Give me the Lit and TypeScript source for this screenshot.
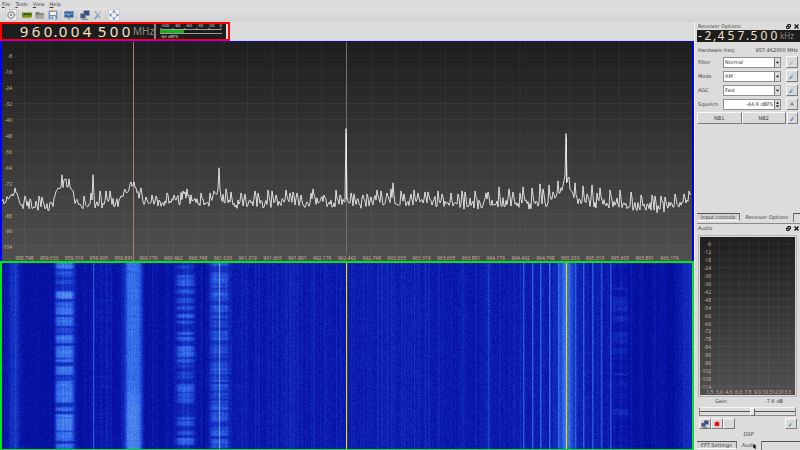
import { LitElement, html, css, svg } from "lit";
import { customElement } from "lit/decorators.js";

/* Deterministic noise so that every paint gives the same trace. */
function makeRandom(seed: number) {
  let s = seed >>> 0;
  return () => {
    s = (s + 0x6d2b79f5) >>> 0;
    let t = s;
    t = Math.imul(t ^ (t >>> 15), t | 1);
    t ^= t + Math.imul(t ^ (t >>> 7), t | 61);
    return ((t ^ (t >>> 14)) >>> 0) / 4294967296;
  };
}

const W = 690;
const FALL_H = 185;

/* Noise floor as [bin, level] pairs, interpolated linearly. */
const FLOOR: [number, number][] = [
  [0, 159], [5, 157], [10, 153], [14, 152], [19, 160], [30, 163], [46, 164], [51, 161], [54, 148],
  [59, 142], [64, 140], [68, 145], [73, 158], [78, 162], [98, 160], [118, 160], [124, 149],
  [131, 143], [136, 147], [142, 160], [158, 161], [174, 158], [184, 154], [194, 158], [202, 161],
  [210, 156], [217, 151], [223, 156], [230, 161], [262, 161], [280, 159], [290, 156], [302, 161],
  [320, 159], [330, 161], [344, 160], [370, 159], [385, 157], [395, 160], [425, 158], [440, 161],
  [480, 160], [545, 160], [557, 154], [561, 144], [563, 132], [566, 132], [568, 144], [572, 154],
  [580, 158], [608, 160], [622, 162], [640, 164], [670, 164], [680, 158], [689, 153],
];

const SPIKES: [number, number][] = [
  [13, 145], [23, 153], [37, 153], [40, 154], [60, 132], [64, 136], [67, 136], [71, 148], [82, 153],
  [89, 150], [91, 132], [98, 148], [104, 148], [108, 148], [119, 153], [129, 139], [132, 139],
  [139, 145], [150, 152], [154, 153], [165, 150], [172, 152], [181, 148], [185, 146], [199, 150],
  [208, 150], [212, 148], [217, 125], [224, 146], [229, 149], [239, 150], [243, 151], [253, 148],
  [256, 150], [266, 147], [270, 148], [274, 152], [284, 147], [288, 150], [291, 149], [295, 150],
  [299, 152], [309, 150], [311, 146], [322, 152], [334, 147], [338, 152], [344, 86], [349, 150],
  [352, 151], [361, 152], [365, 151], [375, 147], [379, 148], [385, 150], [389, 146], [391, 140],
  [399, 148], [402, 151], [409, 151], [412, 147], [416, 150], [423, 149], [426, 149], [436, 148],
  [440, 151], [449, 150], [456, 151], [460, 148], [463, 149], [473, 148], [484, 150], [486, 149],
  [497, 144], [507, 146], [511, 149], [518, 150], [521, 144], [530, 145], [538, 141], [541, 146],
  [547, 142], [551, 149], [556, 138], [564, 91], [573, 140], [581, 143], [585, 151], [590, 142],
  [595, 150], [598, 145], [608, 147], [618, 147], [629, 149], [639, 152], [650, 152], [653, 153],
  [659, 153], [663, 154], [673, 151], [682, 151], [687, 148],
];

/* Steady carriers in the waterfall as [bin, strength]. */
const CARRIERS: [number, number][] = [
  [91, 0.28], [217, 0.45], [486, 0.12], [521, 0.22], [530, 0.26], [538, 0.3], [547, 0.28],
  [556, 0.18], [573, 0.16], [581, 0.28], [590, 0.22], [599, 0.22], [608, 0.18],
];

/* Transmissions as [first line, last line, strength]. */
const CHANNEL_A: [number, number, number][] = [
  [0, 5, 0.5], [8, 13, 0.26], [17, 20, 0.22], [28, 35, 0.5], [39, 44, 0.38], [45, 51, 0.46],
  [54, 62, 0.42], [65, 69, 0.22], [72, 79, 0.42], [83, 93, 0.44], [95, 97, 0.46], [102, 110, 0.44],
  [113, 115, 0.22], [117, 138, 0.44], [143, 146, 0.4], [150, 166, 0.46], [168, 176, 0.4], [180, 184, 0.42],
];
const CHANNEL_B: [number, number, number][] = [
  [3, 4, 0.2], [12, 14, 0.3], [16, 22, 0.34], [26, 30, 0.3], [35, 39, 0.28], [43, 46, 0.28],
  [51, 54, 0.32], [58, 60, 0.32], [69, 71, 0.32], [74, 77, 0.34], [83, 92, 0.4], [95, 98, 0.34],
  [101, 102, 0.26], [108, 114, 0.2], [120, 127, 0.36], [129, 138, 0.28], [153, 155, 0.36],
  [157, 161, 0.32], [167, 170, 0.34], [174, 180, 0.36],
];

function floorAt(x: number) {
  for (let i = 1; i < FLOOR.length; i++) {
    const [x1, y1] = FLOOR[i];
    if (x <= x1) {
      const [x0, y0] = FLOOR[i - 1];
      return y0 + ((y1 - y0) * (x - x0)) / (x1 - x0);
    }
  }
  return FLOOR[FLOOR.length - 1][1];
}

function tracePath() {
  const rnd = makeRandom(21);
  const ys: number[] = [];
  for (let x = 0; x < W; x++) ys.push(floorAt(x) + (rnd() + rnd() - 1) * 7);
  for (const [x, y] of SPIKES) {
    ys[x] = y;
    if (x + 1 < W) ys[x + 1] = (ys[x + 1] + Math.max(y, 146)) / 2;
  }
  return "M" + ys.map((y, x) => `${x} ${y.toFixed(1)}`).join("L");
}

type Stop = [number, number, number, number];
const PALETTE: Stop[] = [
  [0, 0, 0, 120], [0.25, 8, 20, 168], [0.5, 28, 66, 208], [0.75, 58, 118, 240], [1, 110, 160, 225],
];
function shade(v: number) {
  const t = Math.min(1, Math.max(0, v));
  for (let i = 1; i < PALETTE.length; i++) {
    const b = PALETTE[i];
    if (t <= b[0]) {
      const a = PALETTE[i - 1];
      const k = (t - a[0]) / (b[0] - a[0]);
      return [a[1] + (b[1] - a[1]) * k, a[2] + (b[2] - a[2]) * k, a[3] + (b[3] - a[3]) * k];
    }
  }
  return [110, 160, 225];
}

function paintWaterfall(ctx: CanvasRenderingContext2D) {
  const rnd = makeRandom(7);
  const base: number[] = [];
  for (let x = 0; x < W; x++) {
    const lift = Math.max(0, 162 - floorAt(x)) / 100;
    base.push(0.18 + Math.min(0.08, lift) + (x > 225 && x < 610 ? 0.05 : 0) + rnd() * 0.06);
  }
  for (const [x, y] of SPIKES) {
    const gain = 0.07 * Math.min(1, (162 - y) / 14);
    base[x] += gain;
    if (x + 1 < W) base[x + 1] += gain / 2;
  }
  for (let d = -14; d <= 14; d++) base[564 + d] += 0.42 * Math.exp(-(d * d) / 40);
  for (const [x, v] of CARRIERS) {
    base[x] += v;
    if (x !== 217) base[x + 1] += v / 2;
  }
  for (let x = 676; x < W; x++) base[x] += 0.06;

  const soften = (raw: number[]) =>
    raw.map((v, i) => v * 0.6 + (raw[Math.max(0, i - 1)] + (raw[i + 1] ?? v)) * 0.2);
  const keyed = (list: [number, number, number][], idle: number) =>
    soften(Array.from({ length: FALL_H }, (_, y) => {
      const hit = list.find(([a, b]) => y >= a && y <= b);
      return (hit ? hit[2] : idle) * (0.75 + rnd() * 0.4);
    }));
  /* Bursty transmissions: strength changes every few lines. */
  const bursts = (quiet: number, peak: number, maxRun: number) => {
    const raw: number[] = [];
    while (raw.length < FALL_H) {
      const on = rnd() > quiet;
      const run = 1 + Math.floor(rnd() * (on ? maxRun : maxRun * 0.7));
      const level = on ? peak * (0.6 + rnd() * 0.45) : peak * (0.1 + 0.3 * rnd());
      for (let i = 0; i < run; i++) raw.push(level * (0.85 + rnd() * 0.3));
    }
    return soften(raw);
  };
  const steady = (v: number, later = v) =>
    Array.from({ length: FALL_H }, (_, y) => v + (later - v) / (1 + Math.exp((130 - y) / 4)) + (rnd() - 0.5) * 0.05);
  const bands = [
    { mid: 62, half: 6, level: keyed(CHANNEL_A, 0.08) },
    { mid: 183, half: 6, level: keyed(CHANNEL_B, 0.07) },
    { mid: 217, half: 6, level: bursts(0.35, 0.34, 3) },
    { mid: 618, half: 5, level: bursts(0.75, 0.16, 6) },
    { mid: 100, half: 6, level: bursts(0.85, 0.08, 2) },
    { mid: 12, half: 2, level: steady(0.12) },
    { mid: 131, half: 5, level: steady(0.4, 0.5) },
  ];

  const img = ctx.createImageData(W, FALL_H);
  for (let y = 0; y < FALL_H; y++) {
    for (let x = 0; x < W; x++) {
      let v = base[x] + (rnd() - 0.5) * 0.12;
      for (const b of bands) {
        const over = Math.max(0, Math.abs(x - b.mid) - b.half);
        if (over < 9) v += b.level[y] * Math.exp(-(over * over) / 10) * (0.92 + rnd() * 0.16);
      }
      let c = shade(v);
      if (x === 344 || x === 564) c = [218, 214, 40];
      if (x === 345 || x === 565) c = [c[0] * 0.7 + 40, c[1] * 0.7 + 40, c[2] * 0.6];
      const o = (y * W + x) * 4;
      img.data[o] = c[0];
      img.data[o + 1] = c[1];
      img.data[o + 2] = c[2];
      img.data[o + 3] = 255;
    }
  }
  ctx.putImageData(img, 0, 0);
}

const shared = css`
  :host { display: block; box-sizing: border-box; }
  * { box-sizing: border-box; }
  button, select, input { font: inherit; color: inherit; margin: 0; padding: 0; }
`;

@customElement("digit-display")
class DigitDisplay extends LitElement {
  static properties = { value: {}, unit: {} };
  declare value: string;
  declare unit: string;
  static styles = [shared, css`
    :host { display: flex; align-items: center; background: #1d1d1d; color: #f8e2c6; white-space: pre; }
    .digit { width: var(--cell, 12px); text-align: center; }
    .sep { width: 3px; display: flex; justify-content: center; }
    .sep:first-child { width: 6px; }
    .unit { color: #8c8a88; font-size: var(--unit, 10px); margin-left: 1px; }
  `];
  render() {
    return html`${[...this.value].map(
      (c) => html`<span class=${/[0-9]/.test(c) ? "digit" : "sep"}>${c}</span>`
    )}<span class="unit">${this.unit}</span>`;
  }
}

@customElement("spectrum-plot")
class SpectrumPlot extends LitElement {
  static styles = [shared, css`
    :host { display: grid; background: linear-gradient(#1e1e1e, #505050); overflow: hidden; }
    svg, .levels, .freqs { grid-area: 1 / 1; }
    svg { width: 100%; height: 100%; min-height: 0; }
    .levels { display: flex; flex-direction: column; width: 10px; padding: 6px 0 6px; text-align: right; }
    .levels span, .freqs span { flex: 1 1 0; display: flex; align-items: center; }
    .levels span { justify-content: flex-end; }
    .freqs { display: flex; align-self: end; padding: 0 10px; height: 6px; }
    .freqs span { justify-content: center; min-width: 0; }
    .levels, .freqs { font: 5px "Noto Sans", sans-serif; color: #c8b09a; }
  `];
  render() {
    const freqs = Array.from({ length: 27 }, (_, n) => 962.462 + ((n - 13) * 2) / 7);
    const levels = Array.from({ length: 13 }, (_, n) => -8 * (n + 1));
    return html`
      <svg viewBox="0 0 690 218" preserveAspectRatio="none" aria-label="Spectrum">
        <g stroke="#ffffff" stroke-opacity="0.05">
          ${freqs.map((_, n) => svg`<path d="M${(22.5 + n * 24.77).toFixed(1)} 0V211"></path>`)}
          ${levels.map((_, n) => svg`<path d="M11 ${(14 + n * 15.7).toFixed(1)}H690"></path>`)}
        </g>
        <path d="M344.5 0V211" stroke="#69717f" stroke-width="1"></path>
        <path d="M131.5 0V218" stroke="#b07878" stroke-width="1"></path>
        <path d=${tracePath()} fill="none" stroke="#ececec" stroke-width="0.9"></path>
        <path d="M344.5 90V156M564.5 95V140" stroke="#e8e8e8" stroke-width="1"></path>
      </svg>
      <div class="levels">${levels.map((l) => html`<span>${l === -80 ? "" : l}</span>`)}</div>
      <div class="freqs">${freqs.map((f) => html`<span>${f.toFixed(3)}</span>`)}</div>
    `;
  }
}

@customElement("waterfall-plot")
class WaterfallPlot extends LitElement {
  static styles = [shared, css`
    :host { display: grid; overflow: hidden; background: #0808a0; }
    canvas { width: 100%; height: 100%; min-height: 0; display: block; image-rendering: pixelated; }
  `];
  firstUpdated() {
    const ctx = this.renderRoot.querySelector("canvas")!.getContext("2d");
    if (ctx) paintWaterfall(ctx);
  }
  render() {
    return html`<canvas width=${W} height=${FALL_H} aria-label="Waterfall"></canvas>`;
  }
}

@customElement("audio-plot")
class AudioPlot extends LitElement {
  static styles = [shared, css`
    :host { display: grid; background: linear-gradient(#1f1f1f, #505050); overflow: hidden;
      font: 5px "Noto Sans", sans-serif; color: #c8b09a; }
    svg, .levels, .freqs { grid-area: 1 / 1; }
    svg { width: 100%; height: 100%; min-height: 0; }
    .levels { display: flex; flex-direction: column; width: 11px; padding: 3px 0 4px; }
    .levels span { flex: 1 1 0; display: flex; align-items: center; justify-content: flex-end; }
    .freqs { display: flex; align-self: end; height: 6px; padding: 0 4px 0 5px; }
    .freqs span { flex: 1 1 0; min-width: 0; display: flex; justify-content: center; align-items: center; }
  `];
  render() {
    return html`
      <svg viewBox="0 0 97 160" preserveAspectRatio="none" aria-label="Audio spectrum">
        <g stroke="#ffffff" stroke-opacity="0.06">
          ${Array.from({ length: 9 }, (_, n) => svg`<path d="M${10 + n * 10} 0V153"></path>`)}
          ${Array.from({ length: 19 }, (_, n) => svg`<path d="M12 ${7 + n * 8}H97"></path>`)}
        </g>
      </svg>
      <div class="levels">${Array.from({ length: 19 }, (_, n) => html`<span>${-6 * (n + 1)}</span>`)}</div>
      <div class="freqs">${Array.from({ length: 9 }, (_, n) => html`<span>${((n + 1) * 1.5).toFixed(1)}</span>`)}</div>
    `;
  }
}

const iconGear = svg`<circle cx="8" cy="8" r="5" fill="none" stroke="#a0a0a0" stroke-width="2.4"></circle><circle cx="8" cy="8" r="6.8" fill="none" stroke="#a8a8a8" stroke-width="1.4" stroke-dasharray="2 2"></circle><circle cx="8" cy="8" r="1.8" fill="#777"></circle>`;
const iconCard = svg`<path d="M0 4H16V11H0Z" fill="#6c8c1c"></path><path d="M3 5h3v3H3zM7 5h3v3H7zM11 5h3v3h-3z" fill="#33440c"></path><path d="M2 11H14V13H2Z" fill="#b39a30"></path><path d="M0 3V14" stroke="#555"></path>`;
const iconFolder = svg`<path d="M1 3H6L8 5H14V13H1Z" fill="#77776a"></path><path d="M3 7H15.500L14 14H1Z" fill="#a5a596"></path>`;
const iconSave = svg`<path d="M1 1H15V15H1Z" fill="#5b8cc4"></path><path d="M3 1H13V8H3Z" fill="#f2f2ee"></path><path d="M3 1H13V3H3Z" fill="#c77d4a"></path><path d="M4 10H12V15H4Z" fill="#dce4ec"></path><path d="M6 11h2v3H6z" fill="#456"></path>`;
const iconScreen = svg`<rect x="0.500" y="2" width="15" height="10" rx="1" fill="#2c5f9e" stroke="#8fa4bb"></rect><path d="M2 7H5L6 5L8 9L10 6H14" fill="none" stroke="#cfe3f8"></path><path d="M5 14H11" stroke="#999" stroke-width="2"></path>`;
const iconNet = svg`<rect x="6" y="1" width="9" height="8" fill="#34487e" stroke="#9aa0a8"></rect><rect x="1" y="6" width="8" height="7" fill="#3b528c" stroke="#7b828e"></rect><path d="M3 15H13" stroke="#888" stroke-width="2"></path>`;
const iconTools = svg`<path d="M3 2L12 13" stroke="#a4a8ae" stroke-width="2"></path><path d="M13 2L9 7" stroke="#b5b9be" stroke-width="2"></path><path d="M8 8L3 14" stroke="#6c97c8" stroke-width="2.500"></path>`;
const iconFull = svg`<path d="M8 0L11 4H5ZM8 16L11 12H5ZM0 8L4 5V11ZM16 8L12 5V11Z" fill="#5a87bd"></path><path d="M5 5h6v6H5z" fill="#ffffff" stroke="#b8c8da"></path>`;
const iconWrench = svg`<path d="M13 2L8 8" stroke="#c4c8cd" stroke-width="2"></path><path d="M8.500 7.500L4 13" stroke="#5d8fca" stroke-width="2.500"></path><path d="M8 9L12 13" stroke="#cbced2" stroke-width="1.500"></path>`;
const iconWrenchOff = svg`<path d="M13 2L8 8" stroke="#cccccc" stroke-width="2"></path><path d="M8.500 7.500L4 13" stroke="#b4b8bc" stroke-width="2.500"></path>`;
const iconRec = svg`<circle cx="8" cy="8" r="5" fill="#e01818"></circle>`;
const iconPlay = svg`<path d="M6 4L12 8L6 12Z" fill="none" stroke="#cfcfcf"></path>`;
const icon = (shape: unknown) => html`<svg class="icon" viewBox="0 0 16 16" aria-hidden="true">${shape}</svg>`;

@customElement("app-root")
class AppRoot extends LitElement {
  static styles = [shared, css`
    :host { display: flex; flex-direction: column; height: 100vh; overflow: hidden; background: #dcdcdc;
      color: #3c3c3c; font: 5px/8px "DejaVu Sans", sans-serif; }
    .icon { width: 10px; height: 10px; display: block; }
    nav { display: flex; gap: 5px; height: 8px; padding: 0 2px; }
    nav button { border: 0; background: none; }
    .mnemonic { text-decoration: underline; }
    .toolbar { display: flex; align-items: center; height: 14px; padding: 0 5px; gap: 1px; background: linear-gradient(#e0e0e0, #d2d2d2); }
    .toolbar button { border: 0; background: none; width: 12px; height: 12px; display: grid; place-items: center; }
    .toolbar .checked { background: #f0f0f0; border: 1px solid #cccccc; }
    .rule { width: 1px; height: 10px; background: #c8c8c8; margin-right: 1px; }
    .main { flex: 1; min-height: 0; display: grid; grid-template-columns: minmax(0, 1fr) 106px; }
    .left { display: flex; flex-direction: column; min-height: 0; min-width: 0; }
    .tuner { display: flex; align-self: flex-start; width: 230px; height: 19px; border: 2px solid #ff0000; background: #1d1d1d; }
    .tuner digit-display { flex: 1; --cell: 12px; font: 15px/15px "Noto Sans", sans-serif; padding-left: 16px; }
    .meter { width: 75px; border: 1px solid #888; border-right-color: #ddd; border-width: 0 2px; padding: 0 4px; color: #d8d8d8; font: 4px/5px "DejaVu Sans", sans-serif; }
    .scale { display: flex; justify-content: space-between; height: 4px; line-height: 4px; }
    .ticks { display: block; width: 100%; height: 2px; }
    .bar { height: 4px; background: #1d1d1d; border-bottom: 1px solid #999; }
    .fill { height: 3px; background: #18b018; }
    .plot { min-height: 0; border: 2px solid; }
    spectrum-plot.plot { flex: 13 1 0; border-color: #0000ff; border-width: 1px 2px 0; }
    waterfall-plot.plot { flex: 11 1 0; border-color: #00e61e; border-width: 2px 2px 1px 2px; }
    .side { border-left: 1px solid #f6f6f6; display: flex; flex-direction: column; min-height: 0; }
    .side > * { margin-left: 2px; }
    .title { display: flex; align-items: center; height: 8px; gap: 3px; padding: 0 1px; }
    .title .name { flex: 1; }
    .title button { border: 0; background: none; width: 5px; height: 5px; }
    .title .icon { width: 5px; height: 5px; }
    .side digit-display { height: 12px; --cell: 10px; --unit: 8px; font: 12px/12px "Noto Sans", sans-serif; }
    .options { display: flex; flex-direction: column; gap: 2px; padding: 3px 2px 0 1px; }
    .line { display: flex; justify-content: space-between; height: 9px; align-items: center; }
    .row { display: grid; grid-template-columns: 20px minmax(0, 1fr) 12px; column-gap: 5px; height: 12px; align-items: center; }
    .field { display: grid; height: 11px; background: #fff; border: 1px solid #8d8d8d; }
    .field select, .field input { grid-area: 1 / 1; width: 100%; border: 0; background: none; appearance: none; outline: 0; padding: 0 7px 0 1px; height: 9px; }
    .field input { text-align: right; }
    .arrows { grid-area: 1 / 1; justify-self: end; width: 6px; height: 9px; background: #dcdcdc; border-left: 1px solid #777; pointer-events: none; }
    .push { border: 1px solid; border-color: #f8f8f8 #7c7c7c #7c7c7c #f8f8f8; background: #dadada; height: 12px; display: grid; place-items: center; }
    .pair { display: grid; grid-template-columns: 1fr 1fr 12px; padding: 0 2px 0 0; margin-top: 2px; }
    .pair .push:last-child { margin-left: 1px; }
    .space { flex: 1; }
    .dock { display: flex; flex-direction: column; min-height: 0; }
    .dock.receiver { height: 202px; }
    .dock.audio { flex: 1; }
    .tabs { display: flex; height: 9px; border-top: 1px solid #555; }
    .tabs button { border: 0; border-right: 1px solid #777; background: #d2d2d2; height: 7px; line-height: 7px; padding: 0 4px; border-bottom: 1px solid #fafafa; }
    .tabs .active { background: #dcdcdc; border-bottom: 0; margin-top: -1px; height: 9px; line-height: 9px; padding: 0 5px; }
    .tabs.top { height: 11px; border-bottom: 1px solid #8a8a8a; }
    .frame { flex: 1; min-height: 0; display: flex; margin: 3px 3px 0 1px; padding: 1px; border: 1px solid #b4b4b4; }
    audio-plot { flex: 1; }
    .gain { display: flex; justify-content: space-between; padding: 0 17px 0 18px; height: 9px; }
    .slider { appearance: none; width: 97px; height: 9px; margin: 1px 0 0 2px; background: #dcdcdc; border: 1px solid #8a8a8a; border-top-color: #f4f4f4;
      background-image: linear-gradient(transparent 3px, #555 3px, #555 4px, transparent 4px); }
    .slider::-webkit-slider-thumb { appearance: none; width: 5px; height: 8px; background: #e4e4e4; border: 1px solid; border-color: #fff #666 #666 #fff; }
    .actions { display: flex; padding: 2px 3px 0 2px; }
    .actions .push { width: 12px; height: 11px; }
    .actions .icon { width: 8px; height: 8px; }
    .status { text-align: center; font-style: italic; height: 8px; margin-block: 1px 3px; }
    .tabs .hover { position: relative; }
    .pointer { position: absolute; right: 4px; top: 3px; width: 4px; height: 5px; }
  `];

  private dockTitle(name: string) {
    return html`<div class="title">
      <span class="name">${name}</span>
      <button aria-label="Float ${name}"><svg class="icon" viewBox="0 0 10 10"><path d="M3.500 1H9V6H3.500ZM1 4H6.500V9H1Z" fill="#ddd" stroke="#222" stroke-width="2"></path></svg></button>
      <button aria-label="Close ${name}"><svg class="icon" viewBox="0 0 10 10"><path d="M1 1L9 9M9 1L1 9" stroke="#111" stroke-width="2.500"></path></svg></button>
    </div>`;
  }

  private choice(id: string, label: string, value: string, enabled = true) {
    return html`<div class="row">
      <label for=${id}>${label}</label>
      <div class="field">
        <select id=${id}><option>${value}</option></select>
        <svg class="arrows" viewBox="0 0 6 9"><path d="M1 3.500H5L3 6Z" fill="#111"></path></svg>
      </div>
      <button class="push" ?disabled=${!enabled} aria-label="${label} settings">${icon(enabled ? iconWrench : iconWrenchOff)}</button>
    </div>`;
  }

  render() {
    return html`
      <nav>${["File", "Tools", "View", "Help"].map(
        (m) => html`<button><span class="mnemonic">${m[0]}</span>${m.slice(1)}</button>`
      )}</nav>
      <div class="toolbar">
        <button class="checked" aria-label="Start DSP">${icon(iconGear)}</button>
        <span class="rule"></span>
        <button aria-label="Configure device">${icon(iconCard)}</button>
        <button aria-label="Open settings">${icon(iconFolder)}</button>
        <button aria-label="Save settings">${icon(iconSave)}</button>
        <span class="rule"></span>
        <button aria-label="Record IQ">${icon(iconScreen)}</button>
        <span class="rule"></span>
        <button aria-label="Remote control">${icon(iconNet)}</button>
        <button aria-label="Remote control settings">${icon(iconTools)}</button>
        <span class="rule"></span>
        <button class="checked" aria-label="Full screen">${icon(iconFull)}</button>
      </div>
      <div class="main">
        <div class="left">
          <div class="tuner">
            <digit-display value="960.004 500" unit="MHz"></digit-display>
            <div class="meter">
              <div class="scale">${["-100", "-80", "-60", "-40", "-20", "0"].map((t) => html`<span>${t}</span>`)}</div>
              <svg class="ticks" viewBox="0 0 64 2" preserveAspectRatio="none"><path d="M1 1.500H63M1 0V2M13.400 0V2M25.800 0V2M38.200 0V2M50.600 0V2M63 0V2" stroke="#c8c8c8" stroke-width="0.800" fill="none"></path></svg>
              <div class="bar"><div class="fill" style="width:39%"></div></div>
              <div>-60 dBFS</div>
            </div>
          </div>
          <spectrum-plot class="plot"></spectrum-plot>
          <waterfall-plot class="plot"></waterfall-plot>
        </div>
        <div class="side">
          <section class="dock receiver">
            ${this.dockTitle("Receiver Options")}
            <digit-display value="-2,457.500" unit="kHz"></digit-display>
            <div class="options">
              <div class="line"><span>Hardware freq:</span><span>957.462000 MHz</span></div>
              ${this.choice("filter", "Filter", "Normal", false)}
              ${this.choice("mode", "Mode", "AM")}
              ${this.choice("agc", "AGC", "Fast")}
              <div class="row">
                <label for="squelch">Squelch</label>
                <div class="field">
                  <input id="squelch" value="-44.6 dBFS" />
                  <svg class="arrows" viewBox="0 0 6 9"><path d="M1 3.500H5L3 1ZM1 5.500H5L3 8Z" fill="#222"></path></svg>
                </div>
                <button class="push">A</button>
              </div>
            </div>
            <div class="pair">
              <button class="push">NB1</button>
              <button class="push">NB2</button>
              <button class="push" aria-label="Noise blanker settings">${icon(iconWrench)}</button>
            </div>
            <div class="space"></div>
            <div class="tabs top"><button>Input controls</button><button class="active">Receiver Options</button></div>
          </section>
          <section class="dock audio">
            ${this.dockTitle("Audio")}
            <div class="frame"><audio-plot></audio-plot></div>
            <div class="gain"><label for="gain">Gain:</label><span>-7.6 dB</span></div>
            <input class="slider" id="gain" type="range" min="-80" max="50" value="-7.6" step="0.1" />
            <div class="actions">
              <button class="push" aria-label="Stream audio">${icon(iconNet)}</button>
              <button class="push" aria-label="Record audio">${icon(iconRec)}</button>
              <button class="push" aria-label="Play audio">${icon(iconPlay)}</button>
              <span class="space"></span>
              <button class="push" aria-label="Audio settings">${icon(iconWrench)}</button>
            </div>
            <div class="status">DSP</div>
            <div class="tabs"><button>FFT Settings</button><button class="active hover">Audio<svg class="pointer" viewBox="0 0 10 12"><path d="M1 0L9 8H5L7 12H5L3 9L1 10Z" fill="#000"></path></svg></button></div>
          </section>
        </div>
      </div>
    `;
  }
}
